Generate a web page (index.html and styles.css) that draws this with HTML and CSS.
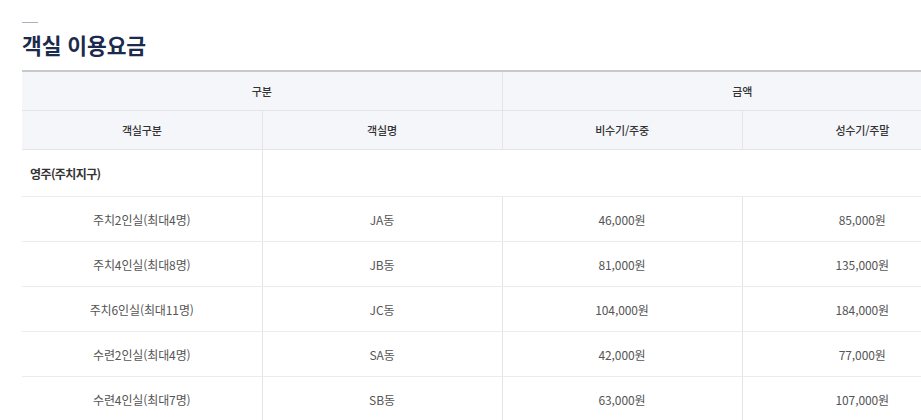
FILE: index.html
```html
<!DOCTYPE html>
<html lang="ko">
<head>
<meta charset="utf-8">
<link rel="stylesheet" href="styles.css">
</head>
<body>
<div class="page">
  <span class="deco"></span>
  <h2 class="title">객실 이용요금</h2>
  <table class="rates">
    <colgroup><col><col><col><col></colgroup>
    <thead>
      <tr class="h1"><th colspan="2">구분</th><th colspan="2" class="bl">금액</th></tr>
      <tr class="h2"><th>객실구분</th><th class="bl">객실명</th><th class="bl">비수기/주중</th><th class="bl">성수기/주말</th></tr>
    </thead>
    <tbody>
      <tr class="group"><td class="gname">영주(주치지구)</td><td colspan="3" class="bl"></td></tr>
      <tr><td>주치2인실(최대4명)</td><td class="bl">JA동</td><td class="bl">46,000원</td><td class="bl">85,000원</td></tr>
      <tr><td>주치4인실(최대8명)</td><td class="bl">JB동</td><td class="bl">81,000원</td><td class="bl">135,000원</td></tr>
      <tr><td>주치6인실(최대11명)</td><td class="bl">JC동</td><td class="bl">104,000원</td><td class="bl">184,000원</td></tr>
      <tr><td>수련2인실(최대4명)</td><td class="bl">SA동</td><td class="bl">42,000원</td><td class="bl">77,000원</td></tr>
      <tr><td>수련4인실(최대7명)</td><td class="bl">SB동</td><td class="bl">63,000원</td><td class="bl">107,000원</td></tr>
    </tbody>
  </table>
</div>
</body>
</html>
```
FILE: styles.css
```css
html, body {
  margin: 0;
  padding: 0;
  background: #fff;
  overflow: hidden;
}
body {
  font-family: "Noto Sans CJK KR", "Noto Sans", sans-serif;
}
.page {
  padding: 22px 0 0 22px;
  width: 1000px;
}
.deco {
  display: block;
  width: 16px;
  height: 1px;
  background: #a9b1c1;
}
.title {
  margin: 8px 0 0;
  font-size: 21.5px;
  line-height: 28px;
  font-weight: 700;
  color: #1c2a4d;
  letter-spacing: -0.1px;
}
.rates {
  margin-top: 11px;
  width: 960px;
  table-layout: fixed;
  border-collapse: collapse;
  border-top: 2px solid #c9c9cc;
}
.rates col { width: 240px; }
.rates th {
  background: #f5f6fa;
  font-size: 11px;
  font-weight: 500;
  color: #333;
  height: 38px;
  padding: 0;
  text-align: center;
  border-bottom: 1px solid #e4e4e8;
  letter-spacing: -0.2px;
}
.rates td {
  height: 44px;
  padding: 0;
  text-align: center;
  font-size: 12px;
  color: #555;
  border-bottom: 1px solid #ececee;
  letter-spacing: -0.1px;
}
.rates .bl { border-left: 1px solid #e4e4e8; }
.rates tr.group td { height: 46px; }
.rates td.gname {
  text-align: left;
  padding-left: 8px;
  font-weight: 700;
  font-size: 12px;
  color: #333;
  letter-spacing: -0.6px;
}
```
